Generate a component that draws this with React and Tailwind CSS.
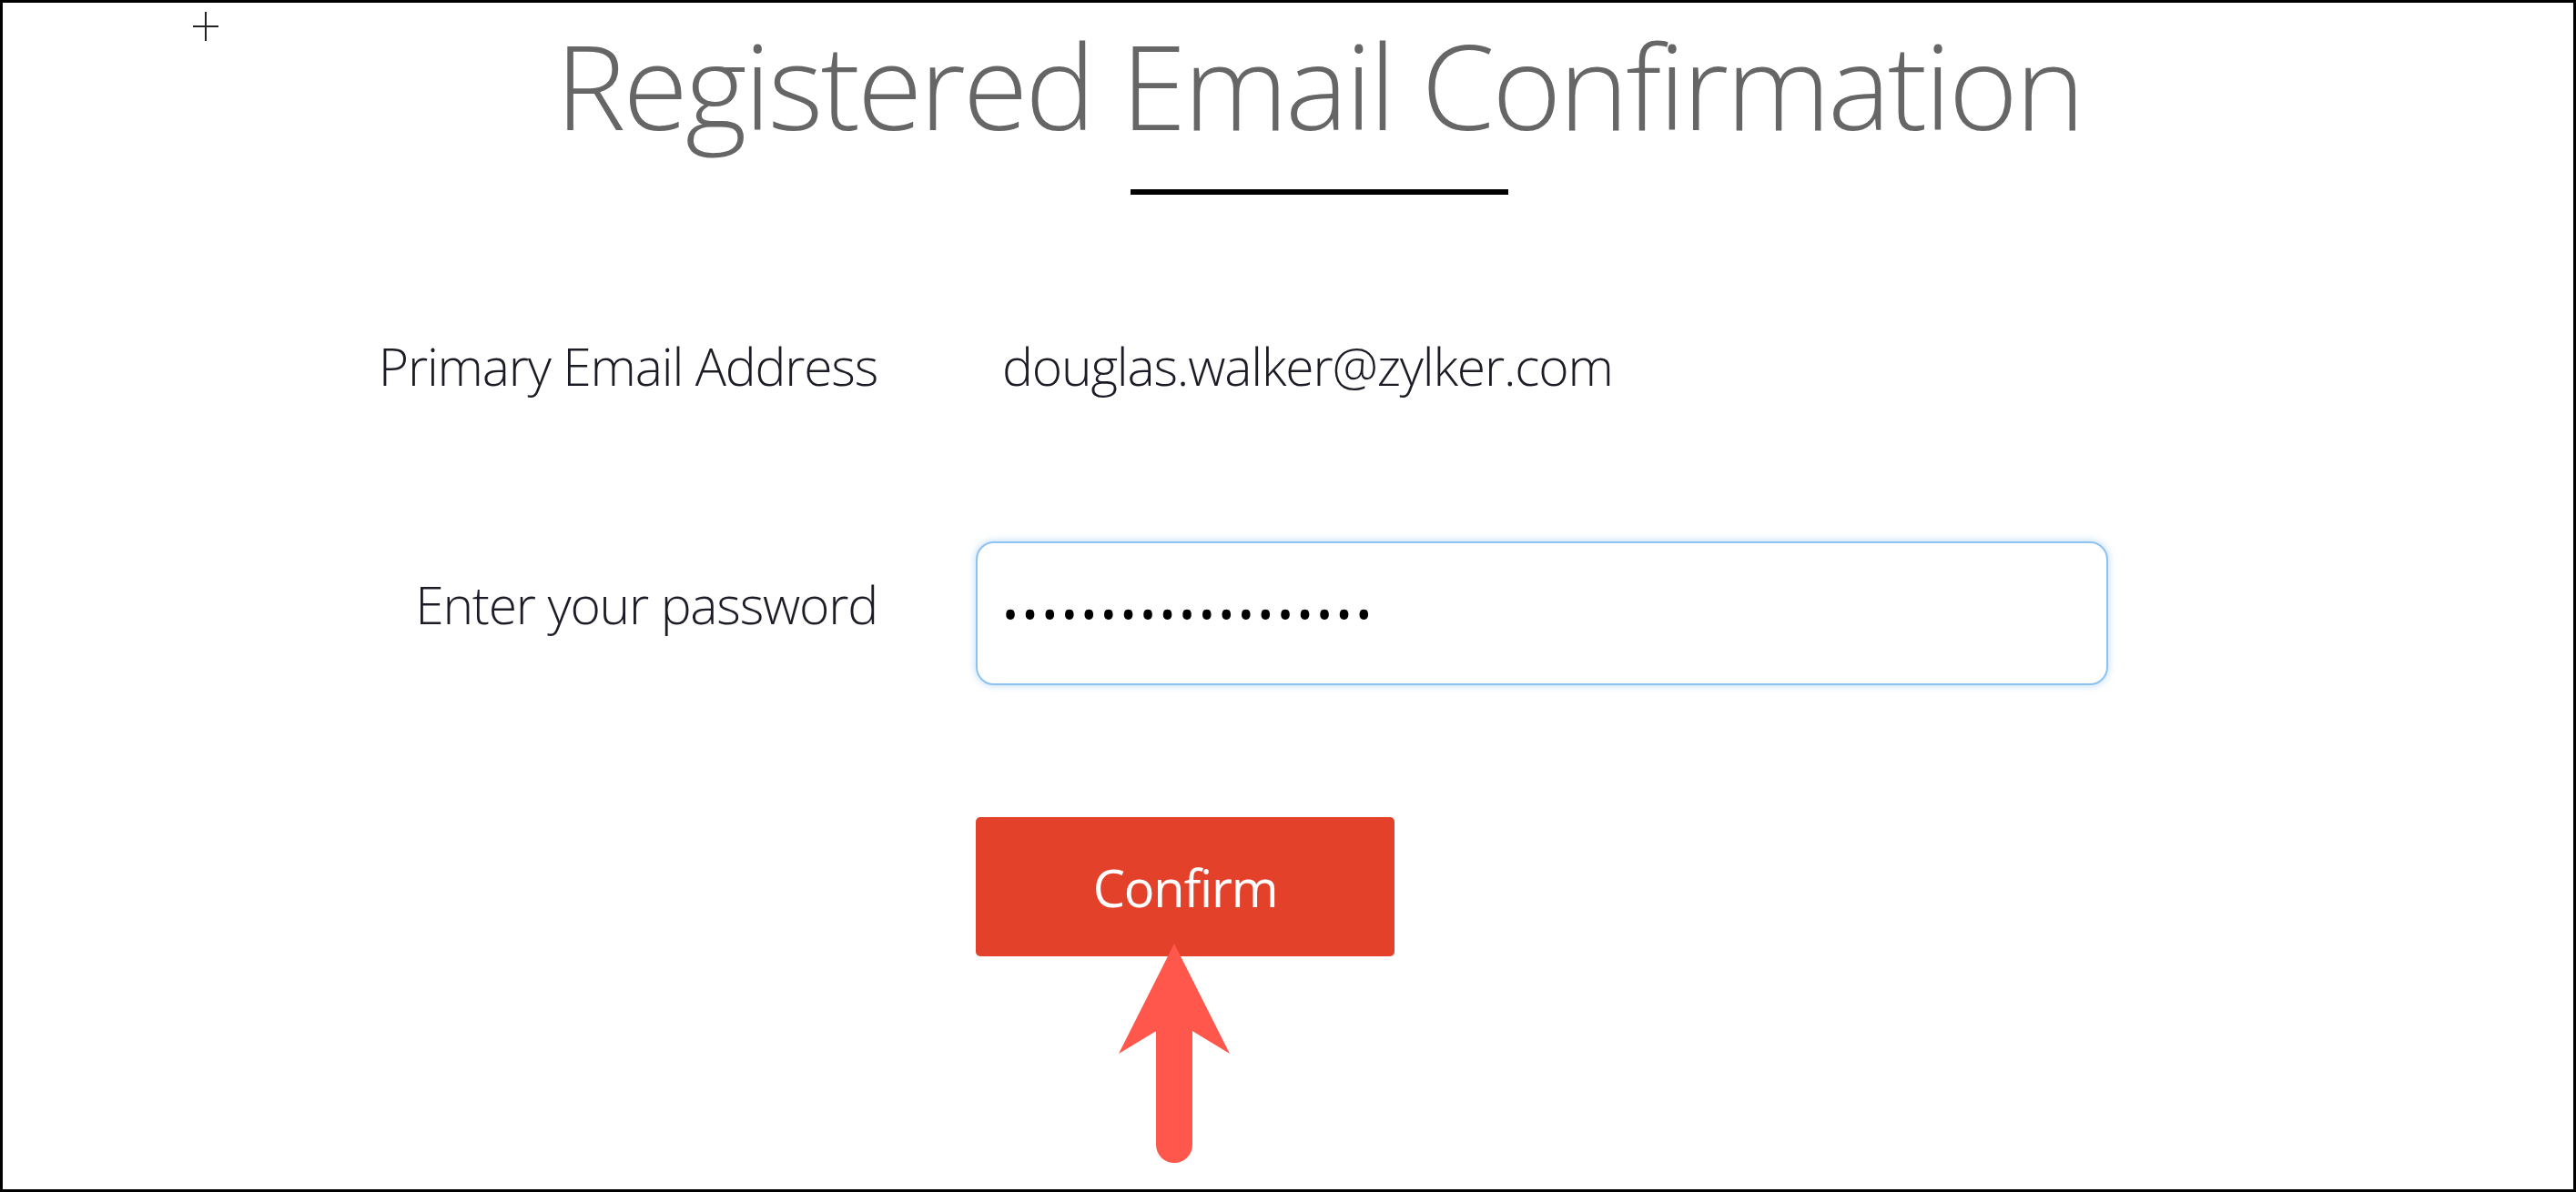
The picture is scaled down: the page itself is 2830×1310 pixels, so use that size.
export default function App() {
    return (
        <div
            className="relative w-[2830px] h-[1310px] overflow-hidden border-[3px] border-black bg-white"
            style={{ fontFamily: '"Open Sans", "Noto Sans", sans-serif' }}
        >
            {/* cursor crosshair */}
            <svg className="absolute left-[207px] top-[8px]" width="32" height="36" viewBox="0 0 32 36">
                <path d="M16 2v32M2 18h28" stroke="#222" strokeWidth="2" fill="none" />
            </svg>

            <div className="flex flex-col items-center pl-[68px]">
                <h1 className="mt-[25px] text-[130px] leading-none font-light tracking-[-3px] text-[#666666]">
                    Registered Email Confirmation
                </h1>
                <div className="mt-[50px] w-[415px] h-[6px] bg-black" />
            </div>

            <div className="grid grid-cols-[961px_1244px] gap-x-[108px] mt-[160px] text-[57px] leading-none font-light tracking-[-1.2px] text-[#1c1c26]">
                <div className="text-right">Primary Email Address</div>
                <div className="pl-[29px]">douglas.walker@zylker.com</div>

                <div className="mt-[164px] pt-[41px] text-right">Enter your password</div>
                <div className="mt-[164px]">
                    <input
                        type="password"
                        readOnly
                        value="douglaswalker123456"
                        className="w-full h-[158px] px-[24px] rounded-[20px] border-2 border-[#8ec3f1] bg-white text-[64px] tracking-[-2.5px] text-black outline-none shadow-[0_0_8px_rgba(120,180,240,0.55)]"
                    />
                </div>

                <div />
                <div className="mt-[145px]">
                    <button
                        type="button"
                        className="w-[460px] h-[153px] rounded-[5px] bg-[#e3412a] text-[56px] font-normal text-white"
                    >
                        Confirm
                    </button>
                </div>
            </div>

            {/* annotation arrow */}
            <svg className="absolute left-[1223px] top-[1034px]" width="128" height="246" viewBox="0 0 128 246">
                <line x1="64" y1="90" x2="64" y2="221" stroke="#ff574b" strokeWidth="40" strokeLinecap="round" />
                <polygon points="64,0 125,121 64,84 3,121" fill="#ff574b" />
            </svg>
        </div>
    );
}
